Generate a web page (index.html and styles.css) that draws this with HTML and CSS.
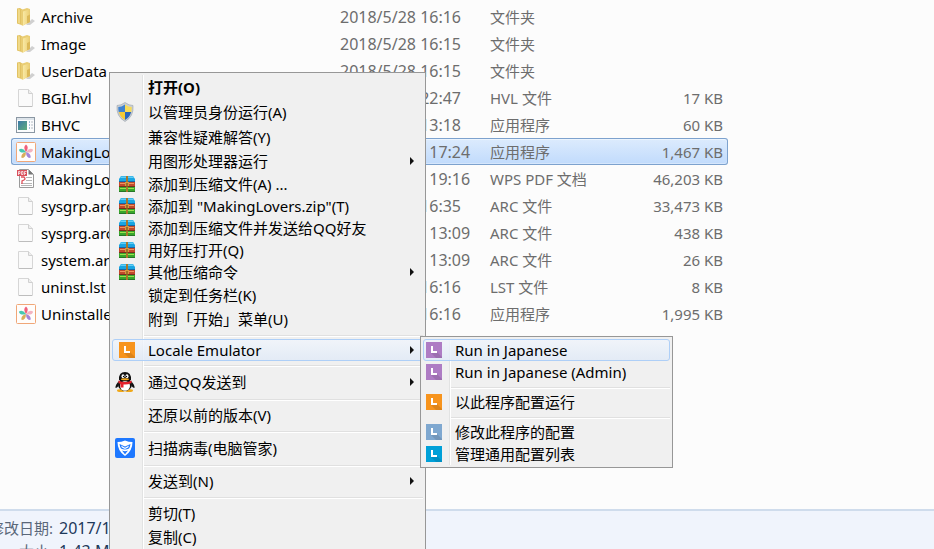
FILE: index.html
```
<!DOCTYPE html>
<html lang="zh-CN">
<head>
    <meta charset="UTF-8">
    <meta name="viewport" content="width=device-width, initial-scale=1.0">
    <title>MakingLovers</title>
    <link rel="stylesheet" href="styles.css">
</head>
<body>
    <svg class="sprite" aria-hidden="true">
        <defs>
            <linearGradient id="gold" x1="0" x2="1">
                <stop offset="0" stop-color="#f9e9a4"/>
                <stop offset="1" stop-color="#ecd077"/>
            </linearGradient>
            <linearGradient id="shot" x1="0" x2="1" y2="1">
                <stop offset="0" stop-color="#3c78a8"/>
                <stop offset="1" stop-color="#5fae7c"/>
            </linearGradient>
        </defs>
        <symbol id="folder" viewBox="0 0 20 20">
            <path d="M10 18l6-6 3 2-5 4z" fill="#d0d0d0"/>
            <path d="M1 1.500l3-.5 3 2v15.500l-6-2z" fill="#e2c263"/>
            <path d="M2 2l2 .5v14l-2-.6z" fill="#f0d988"/>
            <path d="M5 3l6-2 3 1v13l-7 3.500-2-.5z" fill="#e9cd74"/>
            <path d="M7 4.500l6-2v12.500l-6 3.500z" fill="url(#gold)"/>
            <path d="M11 9l3-1.500v7.500l-3 1.500z" fill="#dcb958"/>
        </symbol>
        <symbol id="page" viewBox="0 0 20 20">
            <path d="M2.500 1.500h10l4 4v13h-14z" fill="#fafafa" stroke="#d6d6d6"/>
            <path d="M12.500 1.500v4h4" fill="#eee" stroke="#d0d0d0"/>
            <path d="M3 18.500h13" stroke="#bdbdbd"/>
        </symbol>
        <symbol id="app" viewBox="0 0 20 20">
            <rect x=".5" y="2.500" width="18" height="15" fill="#fbfcfd" stroke="#8b97a3"/>
            <rect x="1" y="3" width="17" height="2" fill="#dde4ea"/>
            <rect x="2" y="6" width="9" height="9" fill="url(#shot)"/>
            <path d="M13 7h1M13 10h1M13 13h1" stroke="#4a80b8"/>
            <path d="M15 7h2M15 10h2M15 13h2" stroke="#b5bcc4"/>
        </symbol>
        <symbol id="flower" viewBox="0 0 20 20">
            <rect x=".5" y=".5" width="19" height="19" rx="1" fill="#fffdfb" stroke="#f0a778"/>
            <path d="M10 10Q6.500 5 10 2.500 13.500 5 10 10z" fill="#f0607c"/>
            <path d="M10 10Q6.500 5 10 2.500 13.500 5 10 10z" fill="#f3b3c0" transform="rotate(72 10 10)"/>
            <path d="M10 10Q6.500 5 10 2.500 13.500 5 10 10z" fill="#a585d8" transform="rotate(144 10 10)"/>
            <path d="M10 10Q6.500 5 10 2.500 13.500 5 10 10z" fill="#d9ad5c" transform="rotate(216 10 10)"/>
            <path d="M10 10Q6.500 5 10 2.500 13.500 5 10 10z" fill="#45c8b0" transform="rotate(288 10 10)"/>
        </symbol>
        <symbol id="pdf" viewBox="0 0 20 20">
            <path d="M3.500 .5h9l5 5v13h-14z" fill="#fff" stroke="#9a9a9a"/>
            <path d="M12.500 .5v5h5z" fill="#777"/>
            <path d="M10 8.500h6M10 11.500h6M5 14.500h11M5 16.500h11" stroke="#b5b5b5"/>
            <rect x="1" y="1" width="10" height="6" fill="#d9505c"/>
            <path d="M2.500 6V2.500h1.500v2h-1.500M5.500 2.500v3h1.500v-3zM8.500 6V2.500h2M8.500 4.500h1.500" fill="none" stroke="#fff" stroke-width=".7"/>
            <path d="M5 8h3q2 2 0 3l-2 1v3" fill="none" stroke="#e0525c" stroke-width="1.300"/>
        </symbol>
        <symbol id="shield" viewBox="0 0 20 20">
            <path d="M10 .5Q6 3.500 2 3.500q-1 11 8 16Q19 14.500 18 3.500q-4 0-8-3z" fill="#c9ced4" stroke="#98a1aa" stroke-width=".6"/>
            <path d="M10 2.500Q6.500 5 3.300 5q-.1 2.500.5 5H10z" fill="#3f83d0"/>
            <path d="M10 2.500Q13.500 5 16.700 5q.1 2.500-.5 5H10z" fill="#f8dc58"/>
            <path d="M3.800 10H10v8q-4.600-2.500-6.200-8z" fill="#f4ca35"/>
            <path d="M16.200 10H10v8q4.600-2.500 6.200-8z" fill="#2a66bb"/>
        </symbol>
        <symbol id="zip" viewBox="0 0 16 16">
            <path d="M2 0h12l2 3v3H0V3z" fill="#19a5e2"/>
            <path d="M2 .5h12l1 1.500H1z" fill="#63cdf3"/>
            <rect y="5" width="16" height="1" fill="#1668a8"/>
            <rect y="6" width="16" height="5" fill="#c04a2c"/>
            <rect x="1" y="7" width="14" height="1" fill="#f0935f"/>
            <rect y="10" width="16" height="1" fill="#7e2c1c"/>
            <path d="M0 11h16v4l-1 1H1l-1-1z" fill="#38a62b"/>
            <rect x="1" y="12" width="14" height="1" fill="#9be04f"/>
            <rect y="15" width="16" height="1" fill="#267528"/>
            <rect x="7" width="2" height="16" fill="#a8772b"/>
            <rect x="6" y="6" width="4" height="4" fill="#d79a3f"/>
            <rect x="7.500" y="7" width="1" height="4" fill="#6d4210"/>
        </symbol>
        <symbol id="locale" viewBox="0 0 16 16">
            <rect width="16" height="16" fill="currentColor"/>
            <path d="M5 11l6-1 5 5v1H10z" fill="#000" opacity=".1"/>
            <path d="M6 4v6h5" fill="none" stroke="#fff" stroke-width="2"/>
        </symbol>
        <symbol id="qq" viewBox="0 0 20 20">
            <ellipse cx="6" cy="18.500" rx="4" ry="1.500" fill="#f0a818"/>
            <ellipse cx="14" cy="18.500" rx="4" ry="1.500" fill="#f0a818"/>
            <path d="M4 9q-4 4-3.500 7 1.500 0 3-2zM16 9q4 4 3.500 7-1.500 0-3-2z" fill="#111"/>
            <ellipse cx="10" cy="12.500" rx="7" ry="6.500" fill="#111"/>
            <path d="M4 8Q3.500 0 10 0t6 8z" fill="#111"/>
            <ellipse cx="10" cy="14" rx="5" ry="4.800" fill="#fff"/>
            <ellipse cx="8" cy="4.200" rx="1.500" ry="2" fill="#fff"/>
            <ellipse cx="12" cy="4.200" rx="1.500" ry="2" fill="#fff"/>
            <circle cx="8.500" cy="4.500" r=".7"/>
            <circle cx="11.500" cy="4.500" r=".7"/>
            <ellipse cx="10" cy="7.300" rx="4" ry="1" fill="#f3a71c"/>
            <path d="M3.500 8.500q6.500 3 13 0v2.500q-4 2-8 1.500v3H5.500V12l-2-1z" fill="#e3202b"/>
        </symbol>
        <symbol id="guard" viewBox="0 0 20 20">
            <rect width="20" height="20" rx="2" fill="#1e78ff"/>
            <path d="M2.500 4q4 0 7.500-1.500Q13.500 4 17.500 4q0 9-7.500 14Q2.500 13 2.500 4z" fill="#fff"/>
            <path d="M4.500 6l5.500 2.500L15.500 6q-.5 3-1.500 4.500-2 1-4 1t-4-1Q5 9 4.500 6z" fill="#1e78ff"/>
            <path d="M6 7.500l4 2.300 4-2.300-.8 2-3.200 1.500-3.200-1.500z" fill="#fff"/>
            <path d="M7 12.500q3 1.500 6 0l-3 3.700z" fill="#1e78ff"/>
        </symbol>
        <symbol id="arrow" viewBox="0 0 4 8">
            <path d="M0 0l4 4-4 4z" fill="#111"/>
        </symbol>
    </svg>

    <main class="files">
        <table class="file-table">
            <colgroup>
                <col class="col-name">
                <col class="col-date">
                <col class="col-type">
                <col class="col-size">
            </colgroup>
            <tbody>
                <tr>
                    <td><div class="name"><svg class="icon"><use href="#folder"/></svg>Archive</div></td>
                    <td class="date">2018/5/28 16:16</td>
                    <td>文件夹</td>
                    <td></td>
                </tr>
                <tr>
                    <td><div class="name"><svg class="icon"><use href="#folder"/></svg>Image</div></td>
                    <td class="date">2018/5/28 16:15</td>
                    <td>文件夹</td>
                    <td></td>
                </tr>
                <tr>
                    <td><div class="name"><svg class="icon"><use href="#folder"/></svg>UserData</div></td>
                    <td class="date">2018/5/28 16:15</td>
                    <td>文件夹</td>
                    <td></td>
                </tr>
                <tr>
                    <td><div class="name"><svg class="icon"><use href="#page"/></svg>BGI.hvl</div></td>
                    <td class="date">2018/4/12 22:47</td>
                    <td>HVL 文件</td>
                    <td>17 KB</td>
                </tr>
                <tr>
                    <td><div class="name"><svg class="icon"><use href="#app"/></svg>BHVC</div></td>
                    <td class="date">2017/9/15 13:18</td>
                    <td>应用程序</td>
                    <td>60 KB</td>
                </tr>
                <tr class="selected">
                    <td><div class="name"><svg class="icon"><use href="#flower"/></svg>MakingLovers</div></td>
                    <td class="date">2017/10/26 17:24</td>
                    <td>应用程序</td>
                    <td>1,467 KB</td>
                </tr>
                <tr>
                    <td><div class="name"><svg class="icon"><use href="#pdf"/></svg>MakingLovers</div></td>
                    <td class="date">2017/10/24 19:16</td>
                    <td>WPS PDF 文档</td>
                    <td>46,203 KB</td>
                </tr>
                <tr>
                    <td><div class="name"><svg class="icon"><use href="#page"/></svg>sysgrp.arc</div></td>
                    <td class="date">2017/9/29 16:35</td>
                    <td>ARC 文件</td>
                    <td>33,473 KB</td>
                </tr>
                <tr>
                    <td><div class="name"><svg class="icon"><use href="#page"/></svg>sysprg.arc</div></td>
                    <td class="date">2017/10/26 13:09</td>
                    <td>ARC 文件</td>
                    <td>438 KB</td>
                </tr>
                <tr>
                    <td><div class="name"><svg class="icon"><use href="#page"/></svg>system.arc</div></td>
                    <td class="date">2017/10/26 13:09</td>
                    <td>ARC 文件</td>
                    <td>26 KB</td>
                </tr>
                <tr>
                    <td><div class="name"><svg class="icon"><use href="#page"/></svg>uninst.lst</div></td>
                    <td class="date">2018/5/28 16:16</td>
                    <td>LST 文件</td>
                    <td>8 KB</td>
                </tr>
                <tr>
                    <td><div class="name"><svg class="icon"><use href="#flower"/></svg>Uninstaller</div></td>
                    <td class="date">2018/5/28 16:16</td>
                    <td>应用程序</td>
                    <td>1,995 KB</td>
                </tr>
            </tbody>
        </table>
    </main>

    <footer class="details">
        <dl>
            <dt>修改日期:</dt>
            <dd>2017/10/26 17:24</dd>
            <dt>大小:</dt>
            <dd>1.43 MB</dd>
        </dl>
    </footer>

    <div class="menu context-menu" role="menu">
        <button class="item medium default" role="menuitem"><span class="slot"></span>打开(O)</button>
        <button class="item tall" role="menuitem"><span class="slot"><svg class="icon"><use href="#shield"/></svg></span>以管理员身份运行(A)</button>
        <button class="item medium" role="menuitem"><span class="slot"></span>兼容性疑难解答(Y)</button>
        <button class="item medium" role="menuitem"><span class="slot"></span>用图形处理器运行<svg class="arrow"><use href="#arrow"/></svg></button>
        <button class="item" role="menuitem"><span class="slot"><svg class="icon small"><use href="#zip"/></svg></span>添加到压缩文件(A) ...</button>
        <button class="item" role="menuitem"><span class="slot"><svg class="icon small"><use href="#zip"/></svg></span>添加到 "MakingLovers.zip"(T)</button>
        <button class="item" role="menuitem"><span class="slot"><svg class="icon small"><use href="#zip"/></svg></span>添加到压缩文件并发送给QQ好友</button>
        <button class="item" role="menuitem"><span class="slot"><svg class="icon small"><use href="#zip"/></svg></span>用好压打开(Q)</button>
        <button class="item" role="menuitem"><span class="slot"><svg class="icon small"><use href="#zip"/></svg></span>其他压缩命令<svg class="arrow"><use href="#arrow"/></svg></button>
        <button class="item medium" role="menuitem"><span class="slot"></span>锁定到任务栏(K)</button>
        <button class="item medium" role="menuitem"><span class="slot"></span>附到「开始」菜单(U)</button>
        <hr>
        <button class="item active" role="menuitem"><span class="slot"><svg class="icon small orange"><use href="#locale"/></svg></span>Locale Emulator<svg class="arrow"><use href="#arrow"/></svg></button>
        <hr>
        <button class="item tall" role="menuitem"><span class="slot"><svg class="icon"><use href="#qq"/></svg></span>通过QQ发送到<svg class="arrow"><use href="#arrow"/></svg></button>
        <hr>
        <button class="item medium" role="menuitem"><span class="slot"></span>还原以前的版本(V)</button>
        <hr>
        <button class="item tall" role="menuitem"><span class="slot"><svg class="icon"><use href="#guard"/></svg></span>扫描病毒(电脑管家)</button>
        <hr>
        <button class="item medium" role="menuitem"><span class="slot"></span>发送到(N)<svg class="arrow"><use href="#arrow"/></svg></button>
        <hr>
        <button class="item medium" role="menuitem"><span class="slot"></span>剪切(T)</button>
        <button class="item medium" role="menuitem"><span class="slot"></span>复制(C)</button>
    </div>

    <div class="menu submenu" role="menu">
        <button class="item active" role="menuitem"><svg class="icon small purple"><use href="#locale"/></svg>Run in Japanese</button>
        <button class="item" role="menuitem"><svg class="icon small purple"><use href="#locale"/></svg>Run in Japanese (Admin)</button>
        <hr>
        <button class="item" role="menuitem"><svg class="icon small orange"><use href="#locale"/></svg>以此程序配置运行</button>
        <hr>
        <button class="item" role="menuitem"><svg class="icon small steel"><use href="#locale"/></svg>修改此程序的配置</button>
        <button class="item" role="menuitem"><svg class="icon small cyan"><use href="#locale"/></svg>管理通用配置列表</button>
    </div>
</body>
</html>
```
FILE: styles.css
```
* {
    box-sizing: border-box;
}

body {
    margin: 0;
    height: 100vh;
    display: flex;
    flex-direction: column;
    overflow: hidden;
    position: relative;
    background-color: #fcfcfc;
    color: #000;
    font-family: "Noto Sans", "Noto Sans CJK SC", sans-serif;
    font-size: 15px;
    line-height: 20px;
}

.sprite {
    position: absolute;
    width: 0;
    height: 0;
}

.icon {
    display: block;
    flex: none;
    width: 20px;
    height: 20px;
}

.icon.small {
    width: 16px;
    height: 16px;
}

.orange {
    color: #f7941d;
}

.purple {
    color: #ae7cc4;
}

.steel {
    color: #7fa8d0;
}

.cyan {
    color: #00a0d8;
}

/* file list */
.files {
    flex: 1;
    min-height: 0;
    padding: 3px 11px;
}

.file-table {
    table-layout: fixed;
    width: 717px;
    border-collapse: separate;
    border-spacing: 0;
}

.col-name {
    width: 329px;
}

.col-date {
    width: 150px;
}

.col-type {
    width: 130px;
}

.file-table td {
    height: 27px;
    padding: 0;
    color: #6d6d6d;
    white-space: nowrap;
}

.file-table td:first-child {
    padding-left: 5px;
    color: #000;
}

.file-table td:last-child {
    padding-right: 5px;
    text-align: right;
}

.file-table .date {
    font-size: 16px;
}

.name {
    display: flex;
    align-items: center;
    gap: 5px;
}

.selected td {
    border: solid #7da2ce;
    border-width: 1px 0;
    background: linear-gradient(#dcebfd, #c1dbfc);
    box-shadow: inset 0 1px #ebf4fe, inset 0 -1px #d5e6fc;
}

.file-table .selected td:first-child {
    padding-left: 4px;
    border-left-width: 1px;
    border-radius: 3px 0 0 3px;
}

.file-table .selected td:last-child {
    padding-right: 4px;
    border-right-width: 1px;
    border-radius: 0 3px 3px 0;
}

/* details pane */
.details {
    height: 40px;
    overflow: hidden;
    border-top: 2px solid #cfdcec;
    background-color: #f0f4fc;
}

.details dl {
    display: grid;
    grid-template-columns: 64px 1fr;
    column-gap: 6px;
    row-gap: 3px;
    margin: 7px 0 0 -11px;
}

.details dt {
    justify-self: end;
    color: #5a6779;
    white-space: nowrap;
}

.details dd {
    margin: 0;
    color: #1e395b;
    font-size: 16px;
}

/* menus */
.menu {
    position: absolute;
    padding: 2px;
    border: 1px solid #979797;
    background-color: #f0f0f0;
}

.context-menu {
    --gutter: 30px;
    top: 72px;
    left: 109px;
    width: 317px;
}

.submenu {
    --gutter: 26px;
    top: 336px;
    left: 420px;
    width: 253px;
}

.menu::before {
    content: "";
    position: absolute;
    top: 2px;
    bottom: 2px;
    left: calc(var(--gutter) + 2px);
    border-left: 1px solid #e2e3e3;
    border-right: 1px solid #fff;
}

.menu hr {
    height: 2px;
    margin: 4px 0 2px calc(var(--gutter) + 2px);
    border: 0;
    border-top: 1px solid #e0e0e0;
    border-bottom: 1px solid #fff;
}

.item {
    position: relative;
    display: flex;
    align-items: center;
    gap: 13px;
    width: 100%;
    height: 22px;
    padding: 0 8px 0 2px;
    border: 1px solid transparent;
    border-radius: 3px;
    background: none;
    color: #000;
    font: inherit;
    text-align: left;
    white-space: nowrap;
}

.item.medium {
    height: 24px;
}

.item.tall {
    height: 26px;
}

.item.default {
    font-weight: bold;
}

.item.active {
    border-color: #aecff7;
    background: linear-gradient(rgba(240, 245, 252, 0.8), rgba(224, 234, 247, 0.8));
}

.slot {
    display: flex;
    flex: none;
    justify-content: flex-end;
    width: 20px;
}

.arrow {
    width: 4px;
    height: 8px;
    margin-left: auto;
}
```
